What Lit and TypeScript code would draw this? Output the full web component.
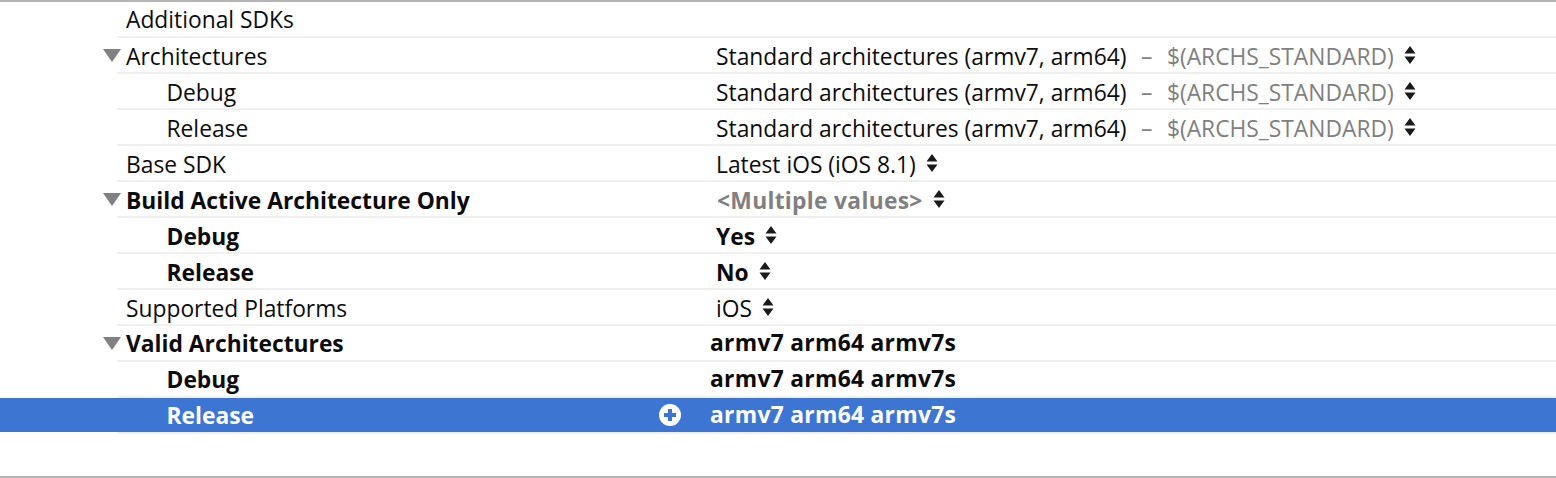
import { LitElement, html, css, svg } from "lit";
import { customElement } from "lit/decorators.js";

interface Row {
  name: string;
  level?: number;
  bold?: boolean;
  open?: boolean;
  selected?: boolean;
  value?: string;
  vbold?: boolean;
  muted?: boolean;
  macro?: string;
  stepper?: boolean;
  list?: boolean;
}

const STD = "Standard architectures (armv7, arm64)";
const ROWS: Row[] = [
  { name: "Additional SDKs", list: true },
  { name: "Architectures", open: true, value: STD, macro: "$(ARCHS_STANDARD)", stepper: true },
  { name: "Debug", level: 1, value: STD, macro: "$(ARCHS_STANDARD)", stepper: true },
  { name: "Release", level: 1, value: STD, macro: "$(ARCHS_STANDARD)", stepper: true },
  { name: "Base SDK", value: "Latest iOS (iOS 8.1)", stepper: true },
  { name: "Build Active Architecture Only", bold: true, open: true, value: "<Multiple values>", vbold: true, muted: true, stepper: true },
  { name: "Debug", level: 1, bold: true, value: "Yes", vbold: true, stepper: true },
  { name: "Release", level: 1, bold: true, value: "No", vbold: true, stepper: true },
  { name: "Supported Platforms", value: "iOS", stepper: true },
  { name: "Valid Architectures", bold: true, open: true, value: "armv7 arm64 armv7s", vbold: true, list: true },
  { name: "Debug", level: 1, bold: true, value: "armv7 arm64 armv7s", vbold: true, list: true },
  { name: "Release", level: 1, bold: true, selected: true, value: "armv7 arm64 armv7s", vbold: true, list: true },
];

const stepper = svg`<svg class="stepper" viewBox="0 0 12 20" width="12" height="20" aria-hidden="true"><path d="M6 1 11.5 8.5H.5Z M.5 11.5H11.5L6 19Z" fill="currentColor"/></svg>`;

@customElement("app-root")
export class AppRoot extends LitElement {
  static styles = css`
    :host {
      display: block;
      box-sizing: border-box;
      width: 1556px;
      height: 478px;
      background: #fff;
      border-top: 2px solid #b4b4b4;
      border-bottom: 2px solid #b4b4b4;
      font-family: "Open Sans", "Noto Sans", sans-serif;
      font-size: 22.8px;
      color: #0c0c0c;
      overflow: hidden;
    }
    .row { display: flex; height: 36px; }
    .row.sel { background: linear-gradient(#3d76d2 0 34px, #fff 34px); color: #fff; }
    .gutter {
      flex: none;
      width: 117px;
      display: flex;
      justify-content: flex-end;
      align-items: center;
      padding-bottom: 2px;
      box-sizing: border-box;
    }
    .tri { flex: none; margin-right: -4px; }
    .body {
      flex: 1;
      display: flex;
      border-bottom: 2px solid #f0f0f0;
      min-width: 0;
    }
    .name {
      flex: none;
      width: 583px;
      box-sizing: border-box;
      padding: 0 19px 0 9px;
      display: flex;
      align-items: center;
      white-space: nowrap;
    }
    .name.l1 { padding-left: 49.5px; }
    .b { font-weight: 700; }
    .plus { margin-left: auto; flex: none; }
    .value {
      flex: 1;
      display: flex;
      align-items: center;
      padding-left: 16px;
      white-space: nowrap;
    }
    .row.low .name span, .row.low .value span { position: relative; top: 1px; }
    .value.list { padding: 0 0 2px 10px; letter-spacing: 0.3px; }
    .muted { color: #808080; }
    .value .muted.b { padding-left: 1px; letter-spacing: 0.3px; }
    .dash { color: #808080; margin: 0 14.5px; }
    .stepper { margin-left: 10px; flex: none; color: #1a1a1a; }
  `;

  private rowTpl(r: Row) {
    return html`<div class="row ${r.selected ? "sel" : ""} ${r.list ? "" : "low"}">
      <div class="gutter">
        ${r.open
          ? html`<svg class="tri" width="18" height="13" viewBox="0 0 18 13" aria-hidden="true"><path d="M0 0H18L9 13Z" fill="#808080"/></svg>`
          : ""}
      </div>
      <div class="body">
        <div class="name ${r.level ? "l1" : ""} ${r.bold ? "b" : ""}">
          <span>${r.name}</span>
          ${r.selected
            ? html`<svg class="plus" width="22" height="22" viewBox="0 0 22 22" aria-hidden="true"><circle cx="11" cy="11" r="11" fill="#fff"/><path d="M9 5h4v4h4v4h-4v4H9v-4H5V9h4Z" fill="#3d76d2"/></svg>`
            : ""}
        </div>
        <div class="value ${r.list ? "list" : ""} ${r.vbold ? "b" : ""}">
          <span class="${r.muted ? "muted b" : ""}">${r.value ?? ""}</span>
          ${r.macro ? html`<span class="dash">–</span><span class="muted">${r.macro}</span>` : ""}
          ${r.stepper ? stepper : ""}
        </div>
      </div>
    </div>`;
  }

  render() {
    return html`${ROWS.map((r) => this.rowTpl(r))}`;
  }
}
